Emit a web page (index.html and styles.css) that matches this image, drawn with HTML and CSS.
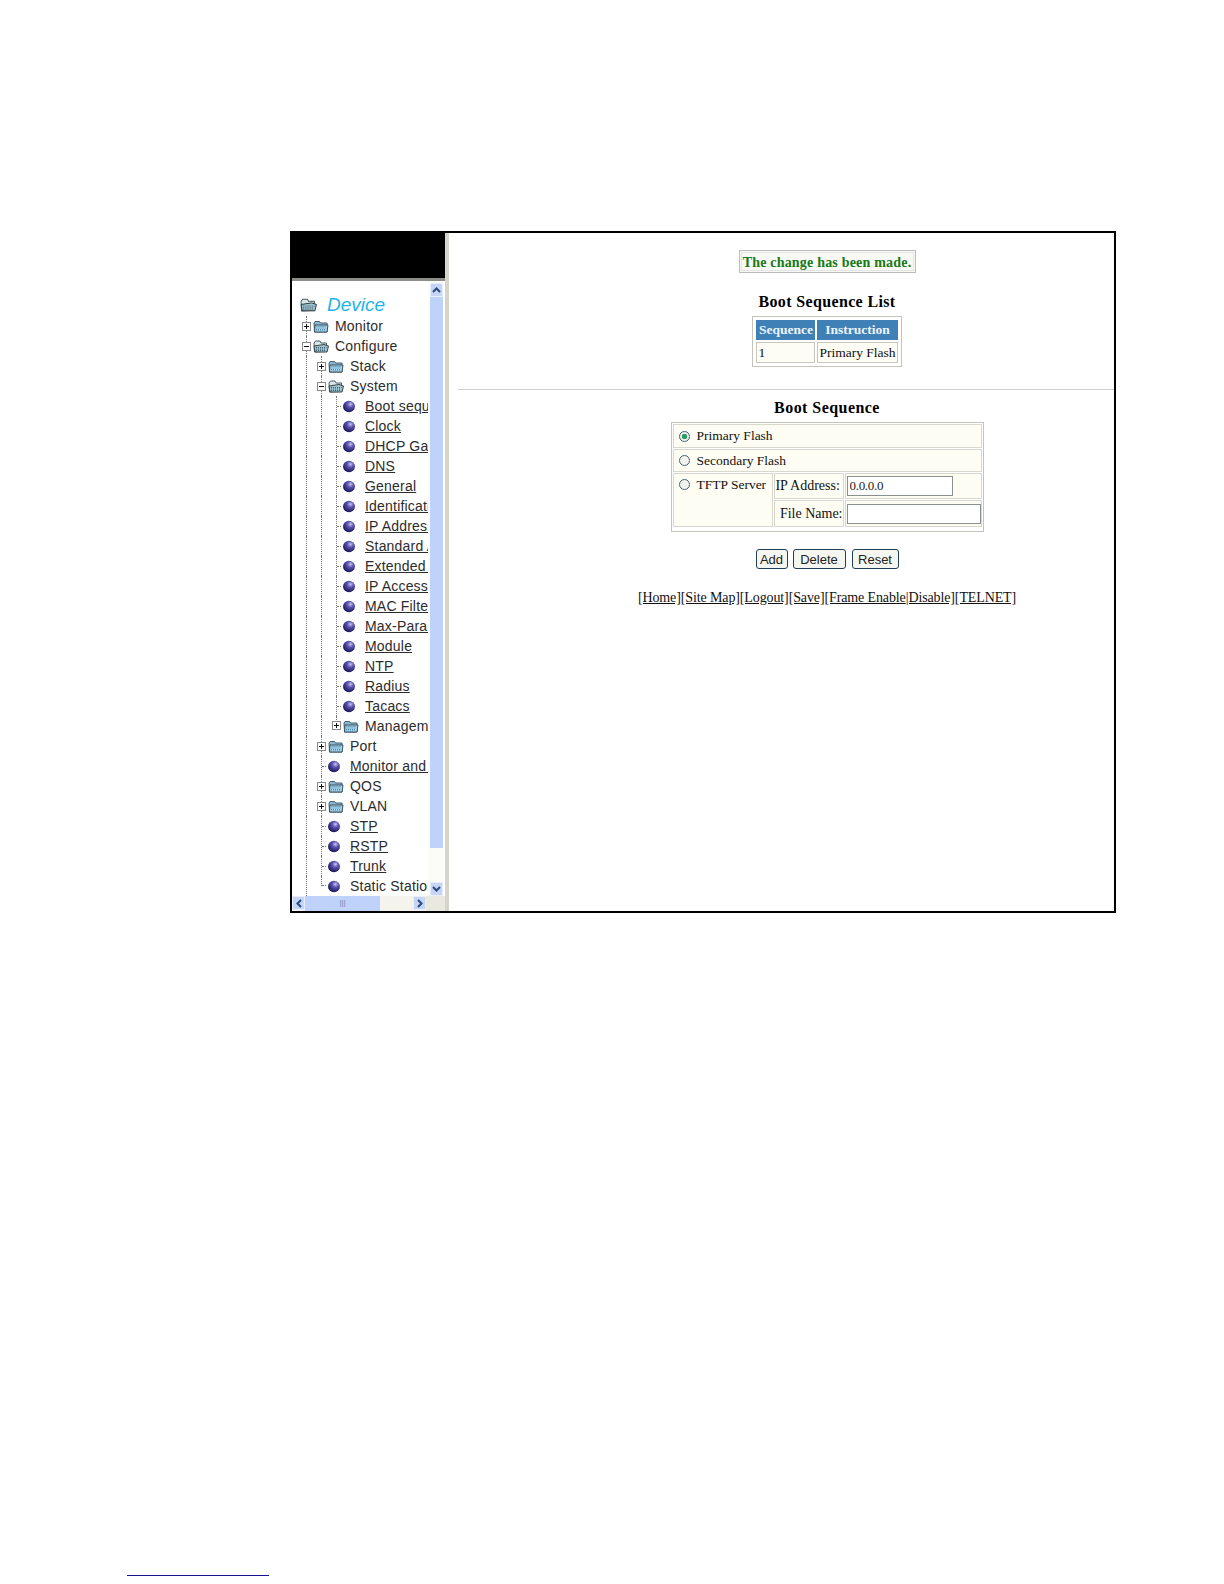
FILE: index.html

```html
<!DOCTYPE html>
<html lang="en">
<head>
  <meta charset="UTF-8">
  <title>Boot Sequence</title>
  <link rel="stylesheet" href="styles.css">
</head>
<body>
  <svg class="defs" width="0" height="0">
    <defs>
      <radialGradient id="ballfill" cx="0.62" cy="0.3" r="0.75">
        <stop offset="0" stop-color="#c9c6ee"/>
        <stop offset="0.35" stop-color="#5f56b4"/>
        <stop offset="1" stop-color="#14104e"/>
      </radialGradient>
      <symbol id="folder" viewBox="0 0 16 13">
        <path d="M1 3 L2 1.5 L6.5 1.5 L7.5 3 L14 3 L14 12 L1.5 12 Z" fill="#8fb7d0" stroke="#46606e"/>
        <path d="M2 5 L15 5 L14 12 L1.5 12 Z" fill="#a9d8ee" stroke="#2f4250" stroke-width="0.9"/>
        <path d="M3.5 6.5 H13 M3.5 8 H13 M3 9.5 H12.5 M3 11 H12.5" stroke="#4f86a6" stroke-dasharray="1 1"/>
      </symbol>
      <symbol id="open" viewBox="0 0 16 13">
        <path d="M1 3 L2.5 1 L7 1 L8 3 L13.5 3 L13.5 11.5 L1.5 12 Z" fill="#d9e6ea" stroke="#505c60"/>
        <path d="M1 6 L11 4.5 L15.5 6 L14 12 L2 12 Z" fill="#9fc2cf" stroke="#26343c" stroke-width="0.9"/>
        <path d="M3 7.5 H13.5 M3 9 H13 M3 10.5 H13" stroke="#3f5e6e" stroke-dasharray="1 1"/>
      </symbol>
      <symbol id="plus" viewBox="0 0 9 9">
        <rect x="0.5" y="0.5" width="8" height="8" fill="#fff" stroke="#8a8a8a"/>
        <path d="M2 4.5 H7 M4.5 2 V7" stroke="#111"/>
      </symbol>
      <symbol id="minus" viewBox="0 0 9 9">
        <rect x="0.5" y="0.5" width="8" height="8" fill="#fff" stroke="#8a8a8a"/>
        <path d="M2 4.5 H7" stroke="#111"/>
      </symbol>
      <symbol id="ball" viewBox="0 0 14 12">
        <ellipse cx="7" cy="6" rx="5.5" ry="5.2" fill="url(#ballfill)"/>
      </symbol>
    </defs>
  </svg>

  <div class="frame">
    <div class="side">
      <div class="banner"></div>
      <div class="side-body">
        <div class="tree">
          <div class="row root">
            <svg class="root-icon"><use href="#open"/></svg>
            <span class="device">Device</span>
          </div>

          <div class="row"><span class="tog"><svg class="box"><use href="#plus"/></svg></span><svg class="fold"><use href="#folder"/></svg><span class="lbl">Monitor</span></div>
          <div class="row"><span class="tog"><svg class="box"><use href="#minus"/></svg></span><svg class="fold"><use href="#open"/></svg><span class="lbl">Configure</span></div>
          <div class="row"><i class="g"></i><span class="tog"><svg class="box"><use href="#plus"/></svg></span><svg class="fold"><use href="#folder"/></svg><span class="lbl">Stack</span></div>
          <div class="row"><i class="g"></i><span class="tog"><svg class="box"><use href="#minus"/></svg></span><svg class="fold"><use href="#open"/></svg><span class="lbl">System</span></div>

          <div class="row"><i class="g"></i><i class="g"></i><span class="tog leaf"><b class="dash"></b></span><svg class="bullet"><use href="#ball"/></svg><a class="lnk">Boot sequence</a></div>
          <div class="row"><i class="g"></i><i class="g"></i><span class="tog leaf"><b class="dash"></b></span><svg class="bullet"><use href="#ball"/></svg><a class="lnk">Clock</a></div>
          <div class="row"><i class="g"></i><i class="g"></i><span class="tog leaf"><b class="dash"></b></span><svg class="bullet"><use href="#ball"/></svg><a class="lnk">DHCP Gateway</a></div>
          <div class="row"><i class="g"></i><i class="g"></i><span class="tog leaf"><b class="dash"></b></span><svg class="bullet"><use href="#ball"/></svg><a class="lnk">DNS</a></div>
          <div class="row"><i class="g"></i><i class="g"></i><span class="tog leaf"><b class="dash"></b></span><svg class="bullet"><use href="#ball"/></svg><a class="lnk">General</a></div>
          <div class="row"><i class="g"></i><i class="g"></i><span class="tog leaf"><b class="dash"></b></span><svg class="bullet"><use href="#ball"/></svg><a class="lnk">Identification</a></div>
          <div class="row"><i class="g"></i><i class="g"></i><span class="tog leaf"><b class="dash"></b></span><svg class="bullet"><use href="#ball"/></svg><a class="lnk">IP Address</a></div>
          <div class="row"><i class="g"></i><i class="g"></i><span class="tog leaf"><b class="dash"></b></span><svg class="bullet"><use href="#ball"/></svg><a class="lnk">Standard ACL</a></div>
          <div class="row"><i class="g"></i><i class="g"></i><span class="tog leaf"><b class="dash"></b></span><svg class="bullet"><use href="#ball"/></svg><a class="lnk">Extended ACL</a></div>
          <div class="row"><i class="g"></i><i class="g"></i><span class="tog leaf"><b class="dash"></b></span><svg class="bullet"><use href="#ball"/></svg><a class="lnk">IP Access</a></div>
          <div class="row"><i class="g"></i><i class="g"></i><span class="tog leaf"><b class="dash"></b></span><svg class="bullet"><use href="#ball"/></svg><a class="lnk">MAC Filter</a></div>
          <div class="row"><i class="g"></i><i class="g"></i><span class="tog leaf"><b class="dash"></b></span><svg class="bullet"><use href="#ball"/></svg><a class="lnk">Max-Parameter</a></div>
          <div class="row"><i class="g"></i><i class="g"></i><span class="tog leaf"><b class="dash"></b></span><svg class="bullet"><use href="#ball"/></svg><a class="lnk">Module</a></div>
          <div class="row"><i class="g"></i><i class="g"></i><span class="tog leaf"><b class="dash"></b></span><svg class="bullet"><use href="#ball"/></svg><a class="lnk">NTP</a></div>
          <div class="row"><i class="g"></i><i class="g"></i><span class="tog leaf"><b class="dash"></b></span><svg class="bullet"><use href="#ball"/></svg><a class="lnk">Radius</a></div>
          <div class="row"><i class="g"></i><i class="g"></i><span class="tog leaf"><b class="dash"></b></span><svg class="bullet"><use href="#ball"/></svg><a class="lnk">Tacacs</a></div>
          <div class="row"><i class="g"></i><i class="g"></i><span class="tog last"><svg class="box"><use href="#plus"/></svg></span><svg class="fold"><use href="#folder"/></svg><span class="lbl">Management</span></div>

          <div class="row"><i class="g"></i><span class="tog"><svg class="box"><use href="#plus"/></svg></span><svg class="fold"><use href="#folder"/></svg><span class="lbl">Port</span></div>
          <div class="row"><i class="g"></i><span class="tog leaf"><b class="dash"></b></span><svg class="bullet"><use href="#ball"/></svg><a class="lnk">Monitor and Mirror</a></div>
          <div class="row"><i class="g"></i><span class="tog"><svg class="box"><use href="#plus"/></svg></span><svg class="fold"><use href="#folder"/></svg><span class="lbl">QOS</span></div>
          <div class="row"><i class="g"></i><span class="tog"><svg class="box"><use href="#plus"/></svg></span><svg class="fold"><use href="#folder"/></svg><span class="lbl">VLAN</span></div>
          <div class="row"><i class="g"></i><span class="tog leaf"><b class="dash"></b></span><svg class="bullet"><use href="#ball"/></svg><a class="lnk">STP</a></div>
          <div class="row"><i class="g"></i><span class="tog leaf"><b class="dash"></b></span><svg class="bullet"><use href="#ball"/></svg><a class="lnk">RSTP</a></div>
          <div class="row"><i class="g"></i><span class="tog leaf"><b class="dash"></b></span><svg class="bullet"><use href="#ball"/></svg><a class="lnk">Trunk</a></div>
          <div class="row"><i class="g"></i><span class="tog leaf last"><b class="dash"></b></span><svg class="bullet"><use href="#ball"/></svg><span class="lbl">Static Station</span></div>
        </div>

        <div class="vscroll">
          <div class="sbtn"><svg width="9" height="6" viewBox="0 0 9 6"><path d="M1 5 L4.5 1.5 L8 5" fill="none" stroke="#2a4a80" stroke-width="2"/></svg></div>
          <div class="vthumb"></div>
          <div class="sbtn"><svg width="9" height="6" viewBox="0 0 9 6"><path d="M1 1 L4.5 4.5 L8 1" fill="none" stroke="#2a4a80" stroke-width="2"/></svg></div>
        </div>
      </div>
      <div class="hscroll">
        <div class="sbtn"><svg width="6" height="9" viewBox="0 0 6 9"><path d="M5 1 L1.5 4.5 L5 8" fill="none" stroke="#2a4a80" stroke-width="2"/></svg></div>
        <div class="hthumb">|||</div>
        <div class="sbtn"><svg width="6" height="9" viewBox="0 0 6 9"><path d="M1 1 L4.5 4.5 L1 8" fill="none" stroke="#2a4a80" stroke-width="2"/></svg></div>
        <div class="corner"></div>
      </div>
    </div>

    <div class="main">
      <div class="content">
        <div class="notice">The change has been made.</div>

        <h3 class="list-title">Boot Sequence List</h3>
        <table class="list">
          <tr><th class="c-seq">Sequence</th><th class="c-ins">Instruction</th></tr>
          <tr><td>1</td><td>Primary Flash</td></tr>
        </table>

        <hr class="rule">

        <h3 class="form-title">Boot Sequence</h3>
        <table class="form">
          <tr class="r1">
            <td colspan="3"><label class="opt"><span class="radio on"></span>Primary Flash</label></td>
          </tr>
          <tr class="r2">
            <td colspan="3"><label class="opt"><span class="radio"></span>Secondary Flash</label></td>
          </tr>
          <tr class="r3">
            <td rowspan="2" class="c-opt"><label class="opt"><span class="radio"></span>TFTP Server</label></td>
            <td class="c-lab">IP Address:</td>
            <td class="c-inp"><input class="ip" type="text" value="0.0.0.0"></td>
          </tr>
          <tr class="r4">
            <td class="c-lab right">File Name:</td>
            <td class="c-inp"><input class="file" type="text"></td>
          </tr>
        </table>

        <div class="buttons">
          <button class="btn b-add">Add</button>
          <button class="btn b-del">Delete</button>
          <button class="btn b-res">Reset</button>
        </div>

        <div class="links">
          <a>[Home]</a><a>[Site Map]</a><a>[Logout]</a><a>[Save]</a><a>[Frame Enable</a><a>|Disable]</a><a>[TELNET]</a>
        </div>
      </div>
    </div>
  </div>

  <div class="footnote"></div>
</body>
</html>
```

FILE: styles.css

```css
html, body {
  margin: 0;
  padding: 0;
  background: #fff;
}
body {
  height: 1584px;
  overflow: hidden;
  padding-top: 231px;
  box-sizing: border-box;
  font-family: "Liberation Serif", serif;
  color: #111;
}
.defs {
  display: block;
  height: 0;
}
.frame {
  display: flex;
  width: 826px;
  height: 682px;
  margin-left: 290px;
  border: 2px solid #000;
  box-sizing: border-box;
  background: #fff;
}

/* left frame */
.side {
  display: flex;
  flex-direction: column;
  flex: none;
  width: 153px;
  box-sizing: content-box;
  border-right: 4px solid #d6d4cc;
}
.banner {
  flex: none;
  height: 45px;
  background: #000;
  border-bottom: 3px solid #8c8c88;
}
.side-body {
  display: flex;
  flex: 1;
  min-height: 0;
}
.tree {
  width: 136px;
  padding: 13px 0 0 14px;
  box-sizing: border-box;
  overflow: hidden;
  font-family: "Liberation Sans", sans-serif;
  font-size: 14px;
  letter-spacing: 0.2px;
  color: #2c2c2c;
}
.row {
  display: flex;
  align-items: center;
  height: 20.03px;
  white-space: nowrap;
}
.row.root {
  height: 22px;
  margin-left: -6px;
}
.root-icon {
  width: 17px;
  height: 14px;
  flex: none;
  margin-right: 10px;
}
.device {
  font-size: 19px;
  font-style: italic;
  letter-spacing: 0;
  color: #1fb4e6;
}
.g {
  flex: none;
  align-self: stretch;
  width: 15px;
  box-sizing: border-box;
  border-left: 1px dotted #777;
}
.tog {
  display: flex;
  align-items: center;
  flex: none;
  align-self: stretch;
  width: 7px;
  box-sizing: border-box;
  border-left: 1px dotted #777;
}
.tog.leaf {
  width: 5px;
}
.tog.last {
  align-self: flex-start;
  height: 50%;
  align-items: flex-end;
}
.tog.last .box {
  margin-bottom: -4px;
}
.box {
  flex: none;
  width: 9px;
  height: 9px;
  margin-left: -5px;
}
.dash {
  flex: 1;
  border-top: 1px dotted #777;
}
.fold {
  flex: none;
  width: 16px;
  height: 13px;
  margin-right: 6px;
}
.bullet {
  flex: none;
  width: 16px;
  height: 13px;
  margin-right: 8px;
}
.lnk {
  color: #2c2c2c;
  text-decoration: underline;
}

.vscroll {
  display: flex;
  flex-direction: column;
  flex: none;
  width: 15px;
  padding: 2px 0 0 2px;
  box-sizing: border-box;
  background: #fbfbf8;
}
.sbtn {
  display: flex;
  align-items: center;
  justify-content: center;
  flex: none;
  width: 13px;
  height: 14px;
  background: #c4d5f6;
  border: 1px solid #e8eefb;
  box-sizing: border-box;
}
.vthumb {
  flex: 1;
  width: 13px;
  margin-bottom: 34px;
  background: #bfd2fa;
}
.hscroll {
  display: flex;
  flex: none;
  height: 15px;
  background: #f4f3ec;
}
.hthumb {
  width: 75px;
  margin-right: 33px;
  background: #bfd2fa;
  text-align: center;
  font: 8px/14px "Liberation Sans", sans-serif;
  color: #7186ad;
}
.corner {
  flex: 1;
  background: #eae9df;
}

/* right frame */
.main {
  flex: 1;
  min-width: 0;
  overflow: hidden;
}
.content {
  display: flex;
  flex-direction: column;
  align-items: center;
  width: 756px;
}
.notice {
  margin-top: 17px;
  width: 177px;
  height: 23px;
  box-sizing: border-box;
  border: 1px solid #bbb;
  outline: 1px solid #e4e4e4;
  outline-offset: -3px;
  background: #f8f8f4;
  color: #177a17;
  font-size: 14px;
  font-weight: bold;
  letter-spacing: 0.2px;
  line-height: 23px;
  text-align: center;
  white-space: nowrap;
}
h3 {
  margin: 0;
  font-size: 16px;
  line-height: 18px;
  font-weight: bold;
  color: #000;
}
.list-title {
  margin-top: 20px;
  letter-spacing: 0.35px;
}
.list {
  margin-top: 5px;
  border-spacing: 2px;
  border: 1px solid #c4c4bc;
  padding: 1px;
  font-size: 13.5px;
}
.list th {
  height: 20px;
  padding: 0;
  background: #3f80b6;
  color: #eef6ff;
  font-weight: bold;
}
.list td {
  height: 19px;
  padding: 0 1px;
  border: 1px solid #c8c8be;
  background: #fdfdf6;
  white-space: nowrap;
}
.list th.c-seq {
  width: 59px;
}
.list th.c-ins {
  width: 77px;
}
.rule {
  align-self: stretch;
  margin: 22px 0 0 9px;
  height: 1px;
  border: 0;
  background: #cfcfcb;
}
.form-title {
  margin-top: 9px;
  letter-spacing: 0.45px;
}
.form {
  margin-top: 5px;
  width: 313px;
  border: 1px solid #c4c4bc;
  border-spacing: 1px;
  padding: 0 0 3px;
  font-size: 14px;
  background: #fff;
}
.form td {
  padding: 0;
  background: #fdfdf4;
  border: 1px solid #d8d8cf;
}
.r1 td { height: 22px; }
.r2 td { height: 21px; }
.r3 td { height: 24px; }
.r4 td { height: 25px; }
.c-opt {
  width: 101px;
  vertical-align: top;
  white-space: nowrap;
}
.c-lab {
  width: 68px;
  white-space: nowrap;
}
.right {
  text-align: right;
  padding-right: 2px;
}
.c-inp {
  padding-left: 1px;
}
.opt {
  display: flex;
  align-items: center;
  height: 21px;
  padding-left: 5px;
  font-size: 13.5px;
}
.radio {
  flex: none;
  width: 11px;
  height: 11px;
  margin-right: 7px;
  box-sizing: border-box;
  border: 1px solid #47616f;
  border-radius: 50%;
  background: #f4f4ee;
}
.radio.on {
  background: radial-gradient(circle, #2f9b64 0 2.5px, #eef2ea 3px);
}
input {
  display: block;
  height: 20px;
  margin-left: 1px;
  padding: 0 2px;
  box-sizing: border-box;
  border: 1px solid #8a8f8f;
  background: #fff;
  font: 13px "Liberation Serif", serif;
  letter-spacing: -0.3px;
  color: #222;
}
.ip { width: 106px; }
.file { width: 134px; }
.buttons {
  display: flex;
  margin-top: 17px;
  gap: 5px;
}
.btn {
  height: 20px;
  padding: 0;
  border: 1px solid #1f3f5a;
  border-radius: 3px;
  background: #f6f6f0;
  font: 13px "Liberation Sans", sans-serif;
  color: #222;
}
.b-add { width: 32px; }
.b-del { width: 53px; }
.b-res { width: 47px; margin-left: 1px; }
.links {
  margin-top: 20px;
  font-size: 14px;
  letter-spacing: -0.12px;
  line-height: 18px;
  white-space: nowrap;
  color: #111;
}
.links a {
  text-decoration: underline;
}

.footnote {
  width: 142px;
  height: 1px;
  margin: 662px 0 0 127px;
  background: #14148c;
}
```
